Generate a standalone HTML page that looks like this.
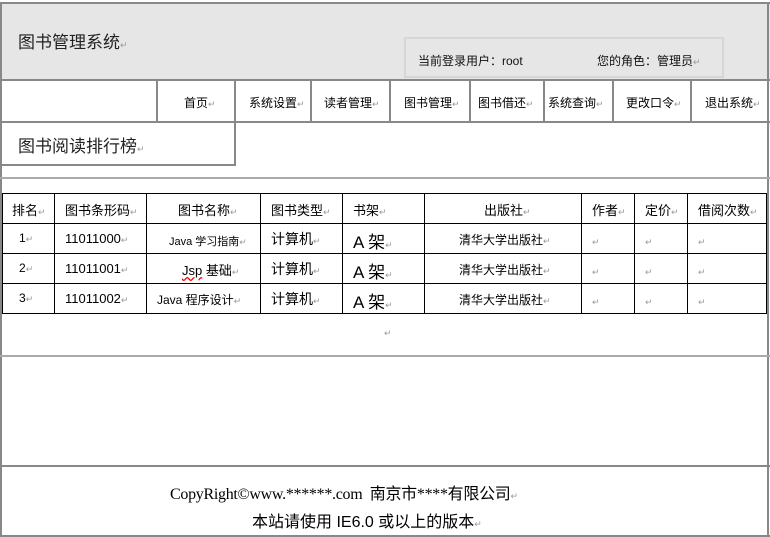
<!DOCTYPE html>
<html><head><meta charset="utf-8"><style>
*{margin:0;padding:0;box-sizing:border-box}
body{width:770px;height:537px;background:#fff;position:relative;overflow:hidden;font-family:"Liberation Sans","Noto Sans CJK SC",sans-serif;color:#000}
.a{position:absolute}
.r{color:#999;font-size:9px}
.t{position:absolute;white-space:nowrap;font-size:12px}
.h{background:#888}
.k{background:#000}
</style></head><body>
<div class="a" style="left:0;top:2px;width:770px;height:78px;background:#e6e6e6"></div>
<div class="a h" style="left:0;top:2px;width:770px;height:2px"></div>
<div class="a h" style="left:0;top:2px;width:2px;height:535px"></div>
<div class="a h" style="left:767px;top:2px;width:2px;height:535px"></div>
<div class="a h" style="left:0;top:535px;width:770px;height:2px"></div>
<div class="a h" style="left:0;top:79px;width:770px;height:2px"></div>
<div class="a h" style="left:0;top:121px;width:770px;height:2px"></div>
<div class="a h" style="left:156px;top:81px;width:2px;height:40px"></div>
<div class="a h" style="left:234px;top:81px;width:2px;height:85px"></div>
<div class="a h" style="left:310px;top:81px;width:2px;height:40px"></div>
<div class="a h" style="left:389px;top:81px;width:2px;height:40px"></div>
<div class="a h" style="left:469px;top:81px;width:2px;height:40px"></div>
<div class="a h" style="left:543px;top:81px;width:2px;height:40px"></div>
<div class="a h" style="left:612px;top:81px;width:2px;height:40px"></div>
<div class="a h" style="left:690px;top:81px;width:2px;height:40px"></div>
<div class="a h" style="left:0;top:164px;width:236px;height:2px"></div>
<div class="a" style="left:0;top:177px;width:770px;height:2px;background:#aaa"></div>
<div class="a" style="left:0;top:355px;width:770px;height:2px;background:#aaa"></div>
<div class="a h" style="left:0;top:465px;width:770px;height:2px"></div>
<div class="a" style="left:404px;top:37px;width:320px;height:41px;border:2px solid #d6d6d6"></div>
<div class="t" style="left:18px;top:28px;font-size:17px;color:#222">图书管理系统<span class="r">↵</span></div>
<div class="t" style="left:418px;top:52px;color:#111">当前登录用户：root</div>
<div class="t" style="left:597px;top:52px;color:#111">您的角色：管理员<span class="r">↵</span></div>
<div class="t" style="left:184px;top:94px">首页<span class="r">↵</span></div>
<div class="t" style="left:249px;top:94px">系统设置<span class="r">↵</span></div>
<div class="t" style="left:324px;top:94px">读者管理<span class="r">↵</span></div>
<div class="t" style="left:404px;top:94px">图书管理<span class="r">↵</span></div>
<div class="t" style="left:478px;top:94px">图书借还<span class="r">↵</span></div>
<div class="t" style="left:548px;top:94px">系统查询<span class="r">↵</span></div>
<div class="t" style="left:626px;top:94px">更改口令<span class="r">↵</span></div>
<div class="t" style="left:705px;top:94px">退出系统<span class="r">↵</span></div>
<div class="t" style="left:18px;top:132px;font-size:17px;color:#222">图书阅读排行榜<span class="r">↵</span></div>
<div class="a k" style="left:2px;top:193px;width:765px;height:1px"></div>
<div class="a k" style="left:2px;top:223px;width:765px;height:1px"></div>
<div class="a k" style="left:2px;top:253px;width:765px;height:1px"></div>
<div class="a k" style="left:2px;top:283px;width:765px;height:1px"></div>
<div class="a k" style="left:2px;top:313px;width:765px;height:1px"></div>
<div class="a k" style="left:2px;top:193px;width:1px;height:121px"></div>
<div class="a k" style="left:54px;top:193px;width:1px;height:121px"></div>
<div class="a k" style="left:146px;top:193px;width:1px;height:121px"></div>
<div class="a k" style="left:260px;top:193px;width:1px;height:121px"></div>
<div class="a k" style="left:342px;top:193px;width:1px;height:121px"></div>
<div class="a k" style="left:424px;top:193px;width:1px;height:121px"></div>
<div class="a k" style="left:581px;top:193px;width:1px;height:121px"></div>
<div class="a k" style="left:634px;top:193px;width:1px;height:121px"></div>
<div class="a k" style="left:687px;top:193px;width:1px;height:121px"></div>
<div class="a k" style="left:766px;top:193px;width:1px;height:121px"></div>
<div class="t" style="left:12px;top:200px;font-size:13px">排名<span class="r">↵</span></div>
<div class="t" style="left:65px;top:200px;font-size:13px">图书条形码<span class="r">↵</span></div>
<div class="t" style="left:178px;top:200px;font-size:13px">图书名称<span class="r">↵</span></div>
<div class="t" style="left:271px;top:200px;font-size:13px">图书类型<span class="r">↵</span></div>
<div class="t" style="left:353px;top:200px;font-size:13px">书架<span class="r">↵</span></div>
<div class="t" style="left:484px;top:200px;font-size:13px">出版社<span class="r">↵</span></div>
<div class="t" style="left:592px;top:200px;font-size:13px">作者<span class="r">↵</span></div>
<div class="t" style="left:645px;top:200px;font-size:13px">定价<span class="r">↵</span></div>
<div class="t" style="left:698px;top:200px;font-size:13px">借阅次数<span class="r">↵</span></div>
<div class="t" style="left:19px;top:231px">1<span class="r">↵</span></div>
<div class="t" style="left:65px;top:231px;font-size:13px">11011000<span class="r">↵</span></div>
<div class="t" style="left:169px;top:233px;font-size:11px">Java 学习指南<span class="r">↵</span></div>
<div class="t" style="left:271px;top:229px;font-size:14px">计算机<span class="r">↵</span></div>
<div class="t" style="left:353px;top:228px;font-size:17px">A 架<span class="r">↵</span></div>
<div class="t" style="left:459px;top:231px">清华大学出版社<span class="r">↵</span></div>
<div class="t" style="left:592px;top:234px"><span class="r">↵</span></div>
<div class="t" style="left:645px;top:234px"><span class="r">↵</span></div>
<div class="t" style="left:698px;top:234px"><span class="r">↵</span></div>
<div class="t" style="left:19px;top:261px">2<span class="r">↵</span></div>
<div class="t" style="left:65px;top:261px;font-size:13px">11011001<span class="r">↵</span></div>
<div class="t" style="left:182px;top:260px;font-size:13px"><span style="text-decoration:underline wavy red">Jsp</span> 基础<span class="r">↵</span></div>
<div class="t" style="left:271px;top:259px;font-size:14px">计算机<span class="r">↵</span></div>
<div class="t" style="left:353px;top:258px;font-size:17px">A 架<span class="r">↵</span></div>
<div class="t" style="left:459px;top:261px">清华大学出版社<span class="r">↵</span></div>
<div class="t" style="left:592px;top:264px"><span class="r">↵</span></div>
<div class="t" style="left:645px;top:264px"><span class="r">↵</span></div>
<div class="t" style="left:698px;top:264px"><span class="r">↵</span></div>
<div class="t" style="left:19px;top:291px">3<span class="r">↵</span></div>
<div class="t" style="left:65px;top:291px;font-size:13px">11011002<span class="r">↵</span></div>
<div class="t" style="left:157px;top:291px">Java 程序设计<span class="r">↵</span></div>
<div class="t" style="left:271px;top:289px;font-size:14px">计算机<span class="r">↵</span></div>
<div class="t" style="left:353px;top:288px;font-size:17px">A 架<span class="r">↵</span></div>
<div class="t" style="left:459px;top:291px">清华大学出版社<span class="r">↵</span></div>
<div class="t" style="left:592px;top:294px"><span class="r">↵</span></div>
<div class="t" style="left:645px;top:294px"><span class="r">↵</span></div>
<div class="t" style="left:698px;top:294px"><span class="r">↵</span></div>
<div class="t" style="left:384px;top:325px"><span class="r">↵</span></div>
<div class="t" style="left:170px;top:480px;font-size:16px;font-family:'Liberation Serif','Noto Sans CJK SC',serif;letter-spacing:-0.3px">CopyRight©www.******.com&nbsp; 南京市****有限公司<span class="r">↵</span></div>
<div class="t" style="left:252px;top:508px;font-size:16px">本站请使用 IE6.0 或以上的版本<span class="r">↵</span></div>
</body></html>
